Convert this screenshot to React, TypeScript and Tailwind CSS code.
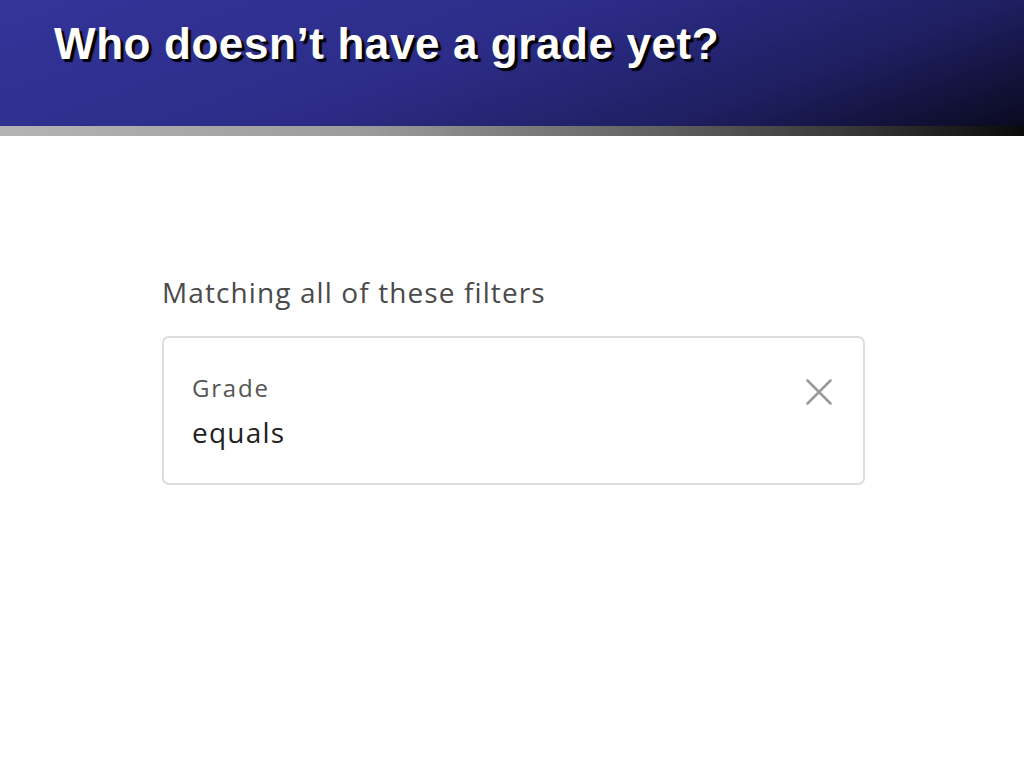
import React from "react";

export default function App() {
  return (
    <div className="w-[1024px] h-[768px] bg-white overflow-hidden flex flex-col">
      <div className="h-[126px] bg-[linear-gradient(160deg,#34349a_0%,#2c2c88_45%,#1e1e60_75%,#0a0a20_100%)] pl-[54px] pt-[18px]">
        <h1
          className="text-white font-bold text-[44px] leading-[52px] tracking-[0.6px] [text-shadow:3px_3px_1px_#000]"
          style={{ fontFamily: '"Liberation Sans", Arial, sans-serif' }}
        >
          Who doesn’t have a grade yet?
        </h1>
      </div>
      <div className="h-[10px] bg-[linear-gradient(90deg,#b4b4b4_0%,#9c9c9c_35%,#6a6a6a_60%,#333333_85%,#0a0a0a_100%)]" />
      <div
        className="pl-[162px] pt-[138px]"
        style={{ fontFamily: '"Open Sans", "Noto Sans", sans-serif' }}
      >
        <div className="text-[#4a4a4a] text-[28px] leading-[36px] tracking-[1.1px]">
          Matching all of these filters
        </div>
        <div className="mt-[26px] w-[703px] h-[149px] border-2 border-[#dddddd] rounded-[7px] flex justify-between pl-[28px] pr-[30px] pt-[34px]">
          <div className="flex flex-col">
            <span className="text-[#555555] text-[24px] leading-[32px] tracking-[1.8px]">Grade</span>
            <span className="text-[#222222] text-[28px] leading-[40px] mt-[8px] tracking-[1.2px]">equals</span>
          </div>
          <svg width="28" height="28" viewBox="0 0 28 28" className="mt-[6px]">
            <path d="M2.5 2.5 L25.5 25.5 M25.5 2.5 L2.5 25.5" stroke="#9a9a9a" strokeWidth="2.6" strokeLinecap="round" />
          </svg>
        </div>
      </div>
    </div>
  );
}
